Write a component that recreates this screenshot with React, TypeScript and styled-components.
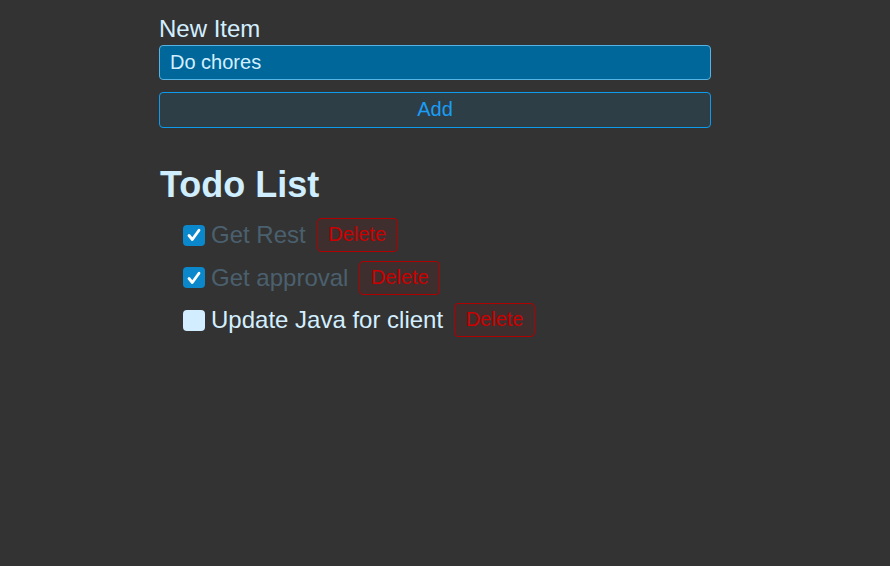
import { useState } from "react";
import styled, { createGlobalStyle } from "styled-components";

interface ITodo {
  id: number;
  text: string;
  done: boolean;
}

const GlobalStyle = createGlobalStyle`
  html, body {
    margin: 0;
    background-color: #333333;
    font-family: Arial, "Liberation Sans", sans-serif;
  }
`;

const Page = styled.div`
  width: 552px;
  margin-left: 159px;
  padding-top: 15px;
`;
const Label = styled.label`
  display: block;
  font-size: 24px;
  color: #d3efff;
  margin-bottom: 2px;
`;
const Input = styled.input`
  display: block;
  box-sizing: border-box;
  width: 100%;
  height: 35px;
  padding: 0 10px;
  font-family: inherit;
  font-size: 20px;
  color: #d3efff;
  background-color: #00679b;
  border: 1px solid #55b4e4;
  border-radius: 4px;
  outline: none;
`;
const AddButton = styled.button`
  display: block;
  box-sizing: border-box;
  width: 100%;
  height: 36px;
  margin-top: 12px;
  padding: 0 0 2px;
  font-family: inherit;
  font-size: 20px;
  color: #1a9df5;
  background-color: #2d3e47;
  border: 1px solid #0e9bee;
  border-radius: 4px;
  cursor: pointer;
`;
const Title = styled.h2`
  margin: 36px 0 0 1px;
  font-size: 36px;
  font-weight: bold;
  color: #cfeeff;
`;
const List = styled.ul`
  list-style: none;
  margin: 12px 0 0;
  padding: 0 0 0 24px;
  display: flex;
  flex-direction: column;
  gap: 8.5px;
`;
const Row = styled.li`
  display: flex;
  align-items: center;
  height: 34px;
`;
const Check = styled.span<{ $checked: boolean }>`
  display: flex;
  align-items: center;
  justify-content: center;
  width: 22px;
  height: 21px;
  border-radius: 4px;
  background-color: ${(props) => (props.$checked ? "#0b88cc" : "#d2edff")};
  cursor: pointer;
`;
const ItemText = styled.span<{ $done: boolean }>`
  margin-left: 6px;
  font-size: 24px;
  color: ${(props) => (props.$done ? "#4b606e" : "#d3efff")};
`;
const DeleteButton = styled.button`
  box-sizing: border-box;
  height: 34px;
  margin-left: 11px;
  padding: 0 10.5px 1px;
  font-family: inherit;
  font-size: 20px;
  color: #cc0000;
  background-color: #3e2e2e;
  border: 1px solid #b00000;
  border-radius: 4px;
  cursor: pointer;
`;

function App() {
  const [todos, setTodos] = useState<ITodo[]>([
    { id: 1, text: "Get Rest", done: true },
    { id: 2, text: "Get approval", done: true },
    { id: 3, text: "Update Java for client", done: false },
  ]);
  const [draft, setDraft] = useState("Do chores");

  const toggle = (id: number) =>
    setTodos(todos.map((t) => (t.id === id ? { ...t, done: !t.done } : t)));

  return (
    <>
      <GlobalStyle />
      <Page>
        <Label htmlFor="new-item">New Item</Label>
        <Input
          id="new-item"
          value={draft}
          onChange={(e) => setDraft(e.target.value)}
        />
        <AddButton
          onClick={() => {
            if (!draft) return;
            setTodos([...todos, { id: Date.now(), text: draft, done: false }]);
            setDraft("");
          }}
        >
          Add
        </AddButton>
        <Title>Todo List</Title>
        <List>
          {todos.map((todo) => (
            <Row key={todo.id}>
              <Check $checked={todo.done} onClick={() => toggle(todo.id)}>
                {todo.done && (
                  <svg width="14" height="14" viewBox="0 0 14 14">
                    <path
                      d="M2 7.5 L5.3 11.5 L12 2.2"
                      fill="none"
                      stroke="#ffffff"
                      strokeWidth="2.8"
                      strokeLinecap="round"
                      strokeLinejoin="round"
                    />
                  </svg>
                )}
              </Check>
              <ItemText $done={todo.done}>{todo.text}</ItemText>
              <DeleteButton
                onClick={() => setTodos(todos.filter((t) => t.id !== todo.id))}
              >
                Delete
              </DeleteButton>
            </Row>
          ))}
        </List>
      </Page>
    </>
  );
}

export default App;
